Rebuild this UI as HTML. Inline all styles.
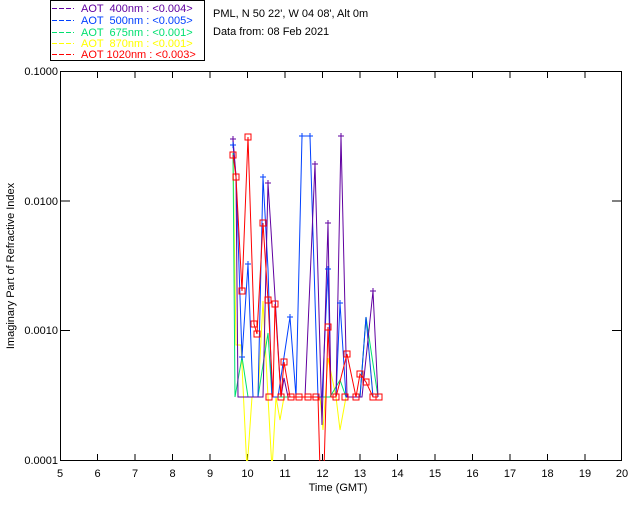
<!DOCTYPE html>
<html><head><style>
body{margin:0;background:#fff;width:640px;height:512px;overflow:hidden}
svg text{font-family:"Liberation Sans",sans-serif;font-size:11px}
</style></head><body>
<svg width="640" height="512" xmlns="http://www.w3.org/2000/svg">
<defs><clipPath id="c"><rect x="60" y="71" width="562" height="390"/></clipPath></defs>
<rect x="50.5" y="0.5" width="154" height="60" fill="none" stroke="#000"/>
<g stroke-dasharray="5,2">
<path d="M52 8.5h22" stroke="#6000a0"/><path d="M52 20.5h22" stroke="#0040ff"/><path d="M52 32.5h22" stroke="#00e070"/><path d="M52 43.5h22" stroke="#ffff00"/><path d="M52 54.5h22" stroke="#ff0000"/>
</g>
<g font-size="11" style="white-space:pre">
<text x="81" y="12" fill="#6000a0" xml:space="preserve">AOT  400nm : &lt;0.004&gt;</text>
<text x="81" y="24" fill="#0040ff" xml:space="preserve">AOT  500nm : &lt;0.005&gt;</text>
<text x="81" y="36" fill="#00e070" xml:space="preserve">AOT  675nm : &lt;0.001&gt;</text>
<text x="81" y="47" fill="#ffff00" xml:space="preserve">AOT  870nm : &lt;0.001&gt;</text>
<text x="81" y="58" fill="#ff0000" xml:space="preserve">AOT 1020nm : &lt;0.003&gt;</text>
<text x="213" y="17" fill="#000">PML, N 50 22', W 04 08', Alt 0m</text>
<text x="213" y="35" fill="#000">Data from: 08 Feb 2021</text>
</g>
<rect x="60.5" y="71.5" width="561" height="389" fill="none" stroke="#000"/>
<g stroke="#000">
<path d="M97.5 461v-7M135 461v-7M172.5 461v-7M210 461v-7M247.5 461v-7M285 461v-7M322.5 461v-7M360 461v-7M397.5 461v-7M435 461v-7M472.5 461v-7M510 461v-7M547.5 461v-7M585 461v-7"/>
<path d="M97.5 71v7M135 71v7M172.5 71v7M210 71v7M247.5 71v7M285 71v7M322.5 71v7M360 71v7M397.5 71v7M435 71v7M472.5 71v7M510 71v7M547.5 71v7M585 71v7"/>
<path d="M60 201h10M60 330.5h10M612 201h10M612 330.5h10"/>
</g>
<g fill="#000" text-anchor="end">
<text x="58" y="75">0.1000</text><text x="58" y="205">0.0100</text><text x="58" y="334">0.0010</text><text x="58" y="464">0.0001</text>
</g>
<g fill="#000" text-anchor="middle">
<text x="60" y="477">5</text><text x="97.5" y="477">6</text><text x="135" y="477">7</text><text x="172.5" y="477">8</text><text x="210" y="477">9</text><text x="247.5" y="477">10</text><text x="285" y="477">11</text><text x="322.5" y="477">12</text><text x="360" y="477">13</text><text x="397.5" y="477">14</text><text x="435" y="477">15</text><text x="472.5" y="477">16</text><text x="510" y="477">17</text><text x="547.5" y="477">18</text><text x="585" y="477">19</text><text x="622" y="477">20</text>
<text x="338" y="491">Time (GMT)</text>
<text transform="translate(14,266) rotate(-90)">Imaginary Part of Refractive Index</text>
</g>
<g clip-path="url(#c)" fill="none" stroke-width="1">
<polyline stroke="#ffff00" points="233,155 236,345 241,345 247,470 252,397 258,397 263,301 268,397 272,470 276,397 280,420 284,397 320,397 323,430 328,358 336,397 340,430 346,397 360,397 366,317 373,397 378,397"/>
<polyline stroke="#00e070" points="233,153 235,397 242,357 248,397 258,397 268,333 272,397 320,397 330,397 340,380 346,397 360,397 366,317 378,397"/>
<polyline stroke="#0040ff" points="233,145 236,176 242,357 248,264 253,397 258,397 263,177 268,269 272,397 278,397 290,317 296,397 302,136 310,136 318,397 322,397 328,269 331,397 336,397 340,303 346,397 352,397 360,397 366,317 373,397 378,397"/>
<polyline stroke="#6000a0" points="233,139 236,176 238,397 248,397 258,397 263,397 268,183 271,230 281,397 284,378 288,397 296,397 305,397 315,164 322,425 328,223 331,397 336,397 341,136 347,397 352,397 362,397 373,291 378,397"/>
<polyline stroke="#ff0000" points="233,155 236,177 242,291 248,137 254,324 257,334 263,223 268,300 273,397 275,304 281,397 284,362 290,397 318,397 320,470 324,470 328,327 331,397 336,397 347,354 356,397 360,374 366,382 373,397 378,397"/>
</g>
<g fill="none" stroke="#ff0000">
<rect x="230" y="152" width="6" height="6"/><rect x="233" y="174" width="6" height="6"/><rect x="239" y="288" width="6" height="6"/><rect x="245" y="134" width="6" height="6"/><rect x="251" y="321" width="6" height="6"/><rect x="254" y="331" width="6" height="6"/><rect x="260" y="220" width="6" height="6"/><rect x="265" y="297" width="6" height="6"/><rect x="272" y="301" width="6" height="6"/><rect x="281" y="359" width="6" height="6"/><rect x="325" y="324" width="6" height="6"/><rect x="344" y="351" width="6" height="6"/><rect x="357" y="371" width="6" height="6"/><rect x="363" y="379" width="6" height="6"/>
<path d="M266 394h6v6h-6zM278 394h6v6h-6zM288 394h6v6h-6zM296 394h6v6h-6zM305 394h6v6h-6zM313 394h6v6h-6zM333 394h6v6h-6zM342 394h6v6h-6zM353 394h6v6h-6zM370 394h6v6h-6zM376 394h6v6h-6z"/>
</g>
<g stroke="#0040ff">
<path d="M230 145h6M233 142v6M299 136h6M302 133v6M307 136h6M310 133v6M260 177h6M263 174v6M245 264h6M248 261v6M287 317h6M290 314v6M325 269h6M328 266v6M337 303h6M340 300v6M239 357h6M242 354v6"/>
</g>
<g stroke="#6000a0">
<path d="M230 139h6M233 136v6M338 136h6M341 133v6M312 164h6M315 161v6M265 183h6M268 180v6M325 223h6M328 220v6M370 291h6M373 288v6"/>
</g>
</svg>
</body></html>
